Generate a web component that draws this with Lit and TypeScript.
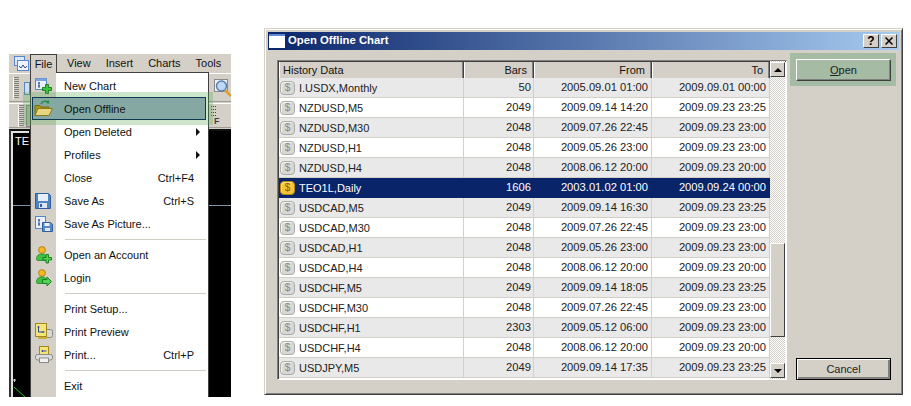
import { LitElement, html, css, svg } from "lit";
import { customElement } from "lit/decorators.js";

const person = (body: string, dark: string) => svg`
  <circle cx="7" cy="4" r="3.4" fill="#f5b820" stroke="#a87508" stroke-width=".8"/>
  <path d="M1.500 13.500c0-4 2-5.500 5.500-5.500 2 0 3.500.6 4.500 2v4.500H3c-1 0-1.500-.3-1.500-1z" fill="${body}" stroke="${dark}" stroke-width=".8"/>`;

const ICONS: Record<string, unknown> = {
  newchart: html`<svg width="17" height="16" viewBox="0 0 17 16">
    <rect x=".5" y=".5" width="11" height="11" fill="#e8f0fc" stroke="#5a86c8"/>
    <rect x=".5" y=".5" width="11" height="2.500" fill="#7aa3de"/>
    <path d="M4 4v6M3 5h2M3 8h2" stroke="#2a4f90" fill="none"/>
    <path d="M11 7h3v3h3v3h-3v3h-3v-3H8v-3h3z" transform="translate(-.5 -.5)" fill="#3fc23f" stroke="#0e7a1a" stroke-width=".9"/>
  </svg>`,
  folder: html`<svg width="19" height="17" viewBox="0 0 19 17">
    <path d="M7 4c1-3 5-3.500 7-2" fill="none" stroke="#1f8f3a" stroke-width="1.300"/>
    <path d="M14.500 0l1 3.500-3.500-.5z" fill="#1f8f3a"/>
    <path d="M1 15.500V5.500h5l1 1.500h8v2" fill="#a8961e" stroke="#7a6c10"/>
    <path d="M1 15.500l3-7h14.500l-3.500 7z" fill="#e6d682" stroke="#8a7a18"/>
  </svg>`,
  save: html`<svg width="16" height="16" viewBox="0 0 16 16">
    <path d="M.5.500h13l2 2v13H.5z" fill="#4f84c4" stroke="#2f5f9c"/>
    <rect x="3" y="1" width="10" height="7" fill="#e8eef6"/>
    <rect x="4" y="10" width="8" height="5" fill="#dfe6ef"/>
    <rect x="5" y="11" width="2" height="3" fill="#2f5f9c"/>
  </svg>`,
  savepic: html`<svg width="18" height="16" viewBox="0 0 18 16">
    <rect x=".5" y=".5" width="10" height="12" fill="#e8f0fc" stroke="#5a86c8"/>
    <path d="M4 3v7M3 4h2M3 8h2" stroke="#2a4f90" fill="none"/>
    <path d="M7.500 6.500h8l2 2v7h-10z" fill="#5a8ac6" stroke="#2f5f9c"/>
    <rect x="9.500" y="7" width="5" height="3" fill="#eef3f9"/>
    <rect x="10" y="12" width="5" height="3" fill="#dfe6ef"/>
  </svg>`,
  account: html`<svg width="17" height="18" viewBox="0 0 17 18">
    ${person("#3fc23f", "#1e8a2a")}
    <path d="M11 8.500h2.500v3h3V14h-3v3H11v-3H8v-2.500h3z" fill="#58d058" stroke="#0e7a1a" stroke-width=".9"/>
  </svg>`,
  login: html`<svg width="17" height="18" viewBox="0 0 17 18">
    ${person("#3fc23f", "#1e8a2a")}
    <path d="M7.500 10.500H12V8l4.500 4.500L12 17v-2.500H7.500z" fill="#58d058" stroke="#0e7a1a" stroke-width=".9"/>
  </svg>`,
  preview: html`<svg width="18" height="17" viewBox="0 0 18 17">
    <rect x="10" y="6.500" width="7.500" height="8" rx="2" fill="#d8d8d8" stroke="#8a8a8a"/>
    <rect x=".5" y=".5" width="11" height="13" fill="#f8e27a" stroke="#a08a20"/>
    <path d="M3.500 3v6h6M2.500 4h2M8 8v2" stroke="#2a4f90" fill="none"/>
    <path d="M3 15h9" stroke="#c8b040" stroke-width="2"/>
  </svg>`,
  print: html`<svg width="18" height="17" viewBox="0 0 18 17">
    <rect x="4.500" y=".5" width="9" height="9" fill="#f8e27a" stroke="#a08a20"/>
    <path d="M6.500 5h5M7.500 4v2" stroke="#2a4f90"/>
    <rect x=".5" y="8.500" width="17" height="5.500" rx="2" fill="#dcdcdc" stroke="#8a8a8a"/>
    <rect x="4.500" y="12" width="9" height="4.500" fill="#f2f2f2" stroke="#8a8a8a"/>
  </svg>`,
};

type Item = { t: string; icon?: string; key?: string; arrow?: boolean; sel?: boolean } | null;
const MENU: Item[] = [
  { t: "New Chart", icon: "newchart" },
  { t: "Open Offline", icon: "folder", sel: true },
  { t: "Open Deleted", arrow: true },
  { t: "Profiles", arrow: true },
  { t: "Close", key: "Ctrl+F4" },
  { t: "Save As", icon: "save", key: "Ctrl+S" },
  { t: "Save As Picture...", icon: "savepic" },
  null,
  { t: "Open an Account", icon: "account" },
  { t: "Login", icon: "login" },
  null,
  { t: "Print Setup..." },
  { t: "Print Preview", icon: "preview" },
  { t: "Print...", icon: "print", key: "Ctrl+P" },
  null,
  { t: "Exit" },
];

const ROWS: [string, string, string, string][] = [
  ["I.USDX,Monthly", "50", "2005.09.01 01:00", "2009.09.01 00:00"],
  ["NZDUSD,M5", "2049", "2009.09.14 14:20", "2009.09.23 23:25"],
  ["NZDUSD,M30", "2048", "2009.07.26 22:45", "2009.09.23 23:00"],
  ["NZDUSD,H1", "2048", "2009.05.26 23:00", "2009.09.23 23:00"],
  ["NZDUSD,H4", "2048", "2008.06.12 20:00", "2009.09.23 20:00"],
  ["TEO1L,Daily", "1606", "2003.01.02 01:00", "2009.09.24 00:00"],
  ["USDCAD,M5", "2049", "2009.09.14 16:30", "2009.09.23 23:25"],
  ["USDCAD,M30", "2048", "2009.07.26 22:45", "2009.09.23 23:00"],
  ["USDCAD,H1", "2048", "2009.05.26 23:00", "2009.09.23 23:00"],
  ["USDCAD,H4", "2048", "2008.06.12 20:00", "2009.09.23 20:00"],
  ["USDCHF,M5", "2049", "2009.09.14 18:05", "2009.09.23 23:25"],
  ["USDCHF,M30", "2048", "2009.07.26 22:45", "2009.09.23 23:00"],
  ["USDCHF,H1", "2303", "2009.05.12 06:00", "2009.09.23 23:00"],
  ["USDCHF,H4", "2048", "2008.06.12 20:00", "2009.09.23 20:00"],
  ["USDJPY,M5", "2049", "2009.09.14 17:35", "2009.09.23 23:25"],
];

@customElement("app-root")
export class AppRoot extends LitElement {
  static styles = css`
    :host {
      display: block;
      width: 911px;
      height: 406px;
      background: #fff;
      overflow: hidden;
      font-family: "Liberation Sans", Arial, sans-serif;
      font-size: 11px;
      line-height: 1;
      color: #111;
    }
    .stage { display: flex; align-items: flex-start; padding-left: 9px; gap: 33px; }

    /* Left application window */
    .app {
      position: relative;
      margin-top: 54px;
      width: 222px;
      height: 343px;
      background: #d4d0c8;
      display: flex;
      flex-direction: column;
      overflow: hidden;
    }
    .menubar { height: 19px; display: flex; align-items: center; padding-left: 5px; flex: none; }
    .appicon { width: 16px; height: 16px; flex: none; }
    .mi { padding: 0 7.500px; flex: none; }
    .mi.file {
      height: 19px; box-sizing: border-box; width: 27px; margin-right: 1px;
      padding: 2px 0 0; text-align: center; line-height: 15px;
      border: 1px solid #404040; border-bottom: 0;
    }
    .mi.view { margin-left: 1.500px; }
    .tb { display: flex; justify-content: space-between; align-items: center; flex: none; border-top: 1px solid #fff; box-shadow: inset 0 -1px 0 #a09c94; }
    .tb1 { height: 28px; padding-left: 4px; }
    .tb2 { height: 24px; margin-top: 1px; padding-left: 9px; }
    .tbleft { display: flex; align-items: center; gap: 5px; }
    .tb2 .tbleft { gap: 2px; }
    .grip { width: 5px; height: 22px; border-left: 1px solid #fff;
      background: repeating-linear-gradient(#80807a 0 1px, transparent 1px 2px); }
    .tbicon { width: 6px; height: 13px; background: #cfe0f6; border: 1px solid #5a86c8; box-sizing: border-box; }
    .tbgreen { width: 8px; height: 22px; background: #a6bca4; border: 1px solid #848484; box-sizing: border-box; }
    .tbright { display: flex; flex-direction: column; align-items: flex-start; width: 20px; }
    .dots { width: 6px; height: 10px; margin-bottom: 1px;
      background: repeating-linear-gradient(90deg, #444 0 1px, transparent 1px 2px),
                  linear-gradient(#d4d0c8,#d4d0c8);
      -webkit-mask: repeating-linear-gradient(#000 0 1px, transparent 1px 3px); }
    .flabel { font-size: 9px; font-weight: bold; color: #444; padding-left: 3px; line-height: 9px; }
    .chart {
      flex: 1; margin-top: 1px; position: relative; background: #000;
      border-left: 2px solid #333; border-top: 2px solid #111;
    }
    .chart .inner { position: absolute; left: 0; top: 0; bottom: 0; width: 2px; background: #e0e0e0; }
    .chart .tl { position: absolute; left: 0; top: 0; width: 18px; height: 2px; background: #e0e0e0; }
    .chart .te { position: absolute; left: 4px; top: 5px; color: #fff; font-size: 11px; }
    .chart .hline { position: absolute; left: 2px; right: 0; top: 74px; height: 1px; background: #8494a8; }
    .chart svg { position: absolute; left: 2px; bottom: 0; }

    .menu {
      position: absolute; left: 21px; top: 18px; width: 179px; height: 326px;
      box-sizing: border-box; border: 1px solid #404040; border-bottom: 0; padding: 1px 2px 0 1px;
      background: linear-gradient(90deg, #d4d0c8 25px, #fff 25px);
    }
    .menu .filegap { position: absolute; left: 0; top: -1px; width: 25px; height: 1px; background: #d4d0c8; }
    .row {
      height: 23px; display: flex; align-items: center; box-sizing: border-box;
      position: relative; color: #111;
    }
    .row .ic { width: 32px; flex: none; padding-left: 3px; box-sizing: border-box; display: flex; align-items: center; }
    .row .lb { flex: 1; padding-top: 1px; }
    .row .ky { padding: 1px 12px 0 0; }
    .row .ar { width: 0; height: 0; margin-right: 6px; border-left: 4px solid #111; border-top: 4px solid transparent; border-bottom: 4px solid transparent; }
    .row.sel { background: #85a9a2; border: 1px solid #0c3a52; z-index: 3; }
    .row.sel .ic { padding-left: 1px; }
    .row.sel .lb { margin-left: -1px; }
    .sep { height: 8px; display: flex; align-items: center; padding-left: 33px; box-sizing: border-box; }
    .sep i { display: block; height: 1px; flex: 1; background: #d0cdc5; }
    .band {
      position: absolute; left: 14px; top: 38px; width: 190px; height: 33px;
      background: rgba(90, 170, 80, 0.3); z-index: 2;
    }

    /* Dialog */
    .dlg {
      margin-top: 28px; width: 639px; height: 367px; box-sizing: border-box;
      background: #d4d0c8; display: flex; flex-direction: column;
      border: 1px solid; border-color: #d4d0c8 #404040 #404040 #d4d0c8;
      box-shadow: inset 1px 1px 0 #fff, inset -1px -1px 0 #808080;
      padding: 3px;
    }
    .title {
      height: 18px; flex: none; display: flex; align-items: center; padding: 0 2px 0 1px;
      background: linear-gradient(90deg, #0a246a, #a6caf0);
      color: #fff; font-weight: bold; font-size: 11.300px;
    }
    .tico { width: 16px; height: 14px; box-sizing: border-box; background: #fff; border-top: 2px solid #5b8ad0; margin-right: 3px; flex: none; }
    .tt { flex: 1; }
    .tbtn {
      width: 16px; height: 14px; box-sizing: border-box; background: #d4d0c8; color: #000;
      border: 1px solid; border-color: #fff #404040 #404040 #fff; display: flex; align-items: center; justify-content: center;
      font-size: 12px; font-weight: bold; margin-left: 2px;
    }
    .body { flex: 1; display: flex; padding: 10px 5px 0 9px; gap: 3px; min-height: 0; }
    .list {
      width: 510px; height: 320px; box-sizing: border-box; flex: none; display: flex;
      border: 1px solid; border-color: #808080 #fff #fff #808080; background: #fff; overflow: hidden;
      box-shadow: inset 1px 1px 0 #404040;
    }
    .tablewrap { width: 492px; padding: 1px 0 0 1px; box-sizing: border-box; flex: none; overflow: hidden; }
    .tr {
      display: grid; grid-template-columns: 185px 70px 118px 118px; box-sizing: border-box; height: 20px;
      border-bottom: 1px solid #d4d0c8; color: #222;
    }
    .tr.gray { background: #e9e9e9; }
    .tr.on { background: #0a246a; color: #fff; border-bottom-color: #0a246a; }
    .tr > div { display: flex; align-items: center; justify-content: flex-end; border-right: 1px solid #d4d0c8; padding-right: 3px; box-sizing: border-box; padding-top: 1px; font-size: 11.200px; }
    .tr > div:nth-child(2) { padding-right: 2px; }
    .tr.on > div { border-right-color: #0a246a; }
    .tr > div.name { justify-content: flex-start; padding-left: 1px; gap: 4px; font-size: 11px; }
    .th { display: grid; grid-template-columns: 185px 70px 118px 118px; height: 16px; background: #d4d0c8; }
    .th > div {
      display: flex; align-items: center; justify-content: flex-end; padding-right: 6px; box-sizing: border-box;
      border-right: 1px solid #404040; box-shadow: inset -1px 0 0 #808080, inset 1px 0 0 #fff;
    }
    .th > div.hname { justify-content: flex-start; padding-left: 4px; }
    .dollar {
      width: 15px; height: 14px; box-sizing: border-box; border-radius: 4px; flex: none;
      background: #d8d8d4; border: 1px solid #aaaaa6; color: #8a8a86; box-shadow: inset 1px 1px 0 #f6f6f4;
      display: flex; align-items: center; justify-content: center; font-size: 10px;
    }
    .dollar.on { background: #f5c537; border-color: #b8860b; color: #8a5c00; box-shadow: inset 1px 1px 0 #ffe38a; }
    .sb { width: 15px; flex: none; display: flex; flex-direction: column; padding-top: 1px;
      background-color: #fff;
      background-image: conic-gradient(#d4d0c8 25%, #fff 0 50%, #d4d0c8 0 75%, #fff 0);
      background-size: 2px 2px; }
    .sbtn, .thumb {
      background: #d4d0c8; box-sizing: border-box; width: 15px; flex: none;
      border: 1px solid; border-color: #fff #404040 #404040 #fff; display: flex; align-items: center; justify-content: center;
    }
    .sbtn { height: 15px; }
    .thumb { height: 94px; margin-top: 166px; }
    .track { height: 26px; flex: none; }
    .up { width: 0; height: 0; border: 4px solid transparent; border-top: 0; border-bottom: 4px solid #000; }
    .dn { width: 0; height: 0; border: 4px solid transparent; border-bottom: 0; border-top: 4px solid #000; }
    .side { position: relative; width: 95px; flex: none; margin-left: 6px; height: 320px; display: flex; flex-direction: column; justify-content: space-between; box-sizing: border-box; }
    .openband { position: absolute; left: -6px; top: -7px; width: 106px; height: 33px; background: #a5bba3; }
    .btn {
      position: relative; width: 95px; height: 22px; box-sizing: border-box; display: flex; align-items: center; justify-content: center;
      background: #d4d0c8; border: 1px solid; border-color: #fff #404040 #404040 #fff; color: #222;
      box-shadow: inset -1px -1px 0 #808080;
    }
    .btn.open { background: #a5bba3; margin-top: -1px; }
    .btn.open u { text-decoration: underline; }
    .btn.cancel { border: 1px solid #000; box-shadow: inset 1px 1px 0 #fff, inset -2px -2px 0 #808080; }
  `;

  private menuRow(it: Item) {
    if (!it) return html`<div class="sep"><i></i></div>`;
    return html`<div class="row ${it.sel ? "sel" : ""}">
      <span class="ic">${it.icon ? ICONS[it.icon] : ""}</span>
      <span class="lb">${it.t}</span>
      ${it.key ? html`<span class="ky">${it.key}</span>` : ""}
      ${it.arrow ? html`<span class="ar"></span>` : ""}
    </div>`;
  }

  render() {
    return html`<div class="stage">
      <div class="app">
        <div class="menubar">
          <svg class="appicon" viewBox="0 0 16 16">
            <rect x=".5" y=".5" width="10" height="9" fill="#dce8fa" stroke="#5a86c8"/>
            <rect x="3.500" y="4.500" width="11" height="10" fill="#eef4fd" stroke="#5a86c8"/>
            <path d="M5 10l2 2 2-3 2 3 2-2" stroke="#2a4f90" fill="none"/>
          </svg>
          <span class="mi file">File</span>
          <span class="mi view">View</span>
          <span class="mi">Insert</span>
          <span class="mi">Charts</span>
          <span class="mi">Tools</span>
        </div>
        <div class="tb tb1">
          <div class="tbleft"><span class="grip"></span><span class="tbicon"></span></div>
          <svg width="17" height="18" viewBox="0 0 17 18">
            <rect x=".5" y=".5" width="13" height="12" fill="#eef2f8" stroke="#8a8a8a"/>
            <circle cx="7.500" cy="7" r="5" fill="#bfd8f5" stroke="#5a7fae" stroke-width="1.500"/>
            <path d="M11 11l6 6" stroke="#e0a030" stroke-width="2.500"/>
          </svg>
        </div>
        <div class="tb tb2">
          <div class="tbleft"><span class="grip"></span><span class="tbgreen"></span></div>
          <div class="tbright"><span class="dots"></span><span class="flabel">F</span></div>
        </div>
        <div class="chart">
          <span class="inner"></span><span class="tl"></span>
          <span class="te">TE</span>
          <span class="hline"></span>
          <svg width="16" height="18" viewBox="0 0 16 18">
            <path d="M0 1h3M1.500 0v3" stroke="#ccc"/>
            <path d="M1 8l11 10" stroke="#22c022" fill="none"/>
          </svg>
        </div>
        <div class="band"></div>
        <div class="menu"><span class="filegap"></span>${MENU.map((m) => this.menuRow(m))}</div>
      </div>

      <div class="dlg">
        <div class="title">
          <span class="tico"></span><span class="tt">Open Offline Chart</span>
          <span class="tbtn">?</span>
          <span class="tbtn"><svg width="8" height="8" viewBox="0 0 8 8"><path d="M.5.500l7 7M7.500.500l-7 7" stroke="#000" stroke-width="1.500"/></svg></span>
        </div>
        <div class="body">
          <div class="list">
            <div class="tablewrap">
              <div class="th">
                <div class="hname">History Data</div><div>Bars</div><div>From</div><div>To</div>
              </div>
              ${ROWS.map((r, i) => {
                const on = i === 5;
                const gray = !on && i % 2 === 0;
                return html`<div class="tr ${on ? "on" : gray ? "gray" : ""}">
                  <div class="name"><span class="dollar ${on ? "on" : ""}">$</span>${r[0]}</div>
                  <div>${r[1]}</div><div>${r[2]}</div><div>${r[3]}</div>
                </div>`;
              })}
              <div class="tr"></div>
            </div>
            <div class="sb">
              <div class="sbtn"><span class="up"></span></div>
              <div class="thumb"></div>
              <div class="track"></div>
              <div class="sbtn"><span class="dn"></span></div>
            </div>
          </div>
          <div class="side">
            <div class="openband"></div>
            <div class="btn open"><span><u>O</u>pen</span></div>
            <div class="btn cancel">Cancel</div>
          </div>
        </div>
      </div>
    </div>`;
  }
}
